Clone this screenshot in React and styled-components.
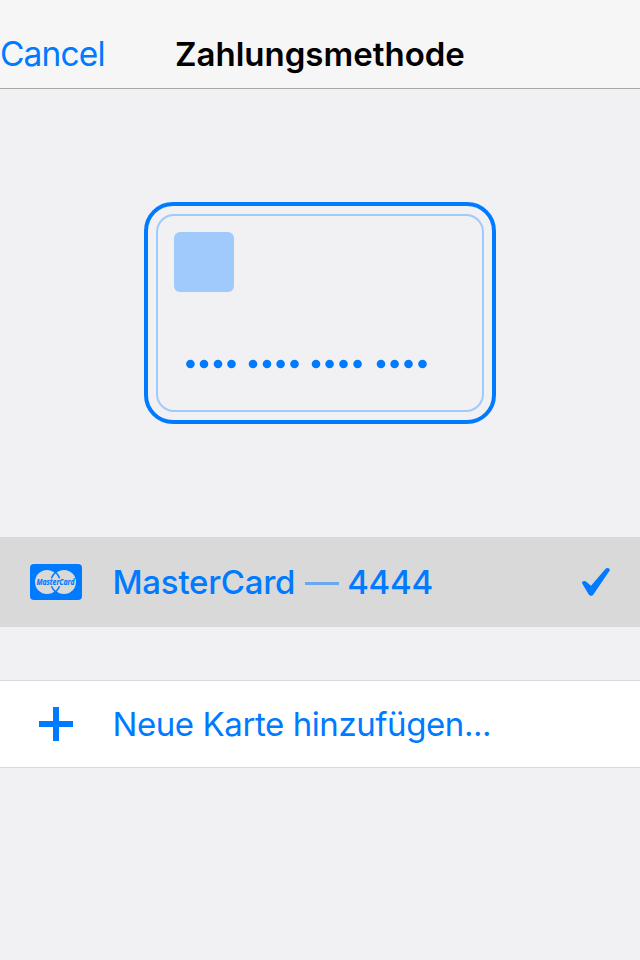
import React from "react";
import styled, { createGlobalStyle } from "styled-components";

const BLUE = "#007aff";

const GlobalStyle = createGlobalStyle`
  *, *::before, *::after { box-sizing: border-box; }
  body {
    margin: 0;
    background: #f1f1f4;
    font-family: Inter, "Liberation Sans", sans-serif;
    -webkit-font-smoothing: antialiased;
  }
`;

const Screen = styled.main`
  width: 640px;
  height: 960px;
  overflow: hidden;
  background: #f1f1f4;
`;

const NavBar = styled.header`
  display: grid;
  grid-template-columns: 175px 1fr;
  align-items: end;
  height: 89px;
  padding-bottom: 12px;
  background: #f6f6f6;
  border-bottom: 1px solid #a8a8aa;
`;

const CancelButton = styled.button`
  border: 0;
  padding: 0;
  background: none;
  color: ${BLUE};
  font: 400 33.5px/44px Inter, sans-serif;
  letter-spacing: -0.85px;
  text-align: left;
`;

const Title = styled.h1`
  margin: 0;
  color: #000;
  font-size: 33px;
  font-weight: 600;
  line-height: 44px;
  letter-spacing: 0;
  white-space: nowrap;
`;

const Preview = styled.section`
  display: flex;
  justify-content: center;
  height: 448px;
  padding-top: 113px;
`;

const CardOutline = styled.div`
  width: 352px;
  height: 222px;
  padding: 8px;
  border: 4px solid ${BLUE};
  border-radius: 29px;
`;

const CardFace = styled.div`
  display: flex;
  flex-direction: column;
  height: 100%;
  padding: 16px;
  border: 2px solid #9fcafb;
  border-radius: 18px;
`;

const Chip = styled.div`
  width: 60px;
  height: 60px;
  border-radius: 6px;
  background: #9fcafb;
`;

const CardNumber = styled.svg`
  display: block;
  width: 260px;
  height: 12px;
  margin-top: 66px;
  fill: ${BLUE};
`;

const Row = styled.div`
  display: grid;
  grid-template-columns: 112px 1fr 60px;
  align-items: center;
  height: ${(p) => (p.$selected ? 90 : 88)}px;
  margin-top: ${(p) => (p.$selected ? 0 : 53)}px;
  background: ${(p) => (p.$selected ? "#d9d9d9" : "#fff")};
  border: solid #d9d9dc;
  border-width: ${(p) => (p.$selected ? "0" : "1px 0")};
  color: ${BLUE};
`;

const RowIcon = styled.svg`
  display: block;
  justify-self: ${(p) => p.$align || "center"};
`;

const Label = styled.div`
  display: flex;
  align-items: center;
  padding-left: 0.5px;
  font-size: 33px;
  line-height: 44px;
  font-weight: ${(p) => p.$weight};
  letter-spacing: ${(p) => p.$tracking}px;
  white-space: nowrap;
`;

const Dash = styled.span`
  width: 34px;
  height: 3px;
  margin: 3px 8px 0 10px;
  background: #6ba9ef;
`;

const groups = [
  [190.4, 204, 218, 231.5],
  [253, 267, 280.6, 294.5],
  [316, 329.6, 343.5, 357.6],
  [381, 394.6, 408.5, 422.5],
];

function MasterCardIcon() {
  return (
    <RowIcon width="52" height="36" viewBox="0 0 52 36">
      <rect width="52" height="36" rx="4" fill={BLUE} />
      <circle cx="17" cy="18" r="12" fill="#d9d9d9" />
      <circle cx="34" cy="18" r="12" fill="#d9d9d9" />
      <path d="M25.5 8.2Q22.8 10.7 21.4 14.2M25.5 8.2Q28.2 10.7 29.6 14.2M25.5 27.8Q22.8 25.4 21.4 22.3M25.5 27.8Q28.2 25.4 29.6 22.3" fill="none" stroke={BLUE} strokeWidth="1.5" />
      <text x="6.5" y="20.8" fill={BLUE} stroke={BLUE} strokeWidth="0.15" fontFamily="Open Sans, sans-serif" fontSize="8" fontWeight="700" fontStyle="italic" textLength="38" lengthAdjust="spacingAndGlyphs">MasterCard</text>
    </RowIcon>
  );
}

export default function App() {
  return (
    <>
      <GlobalStyle />
      <Screen>
        <NavBar>
          <CancelButton type="button">Cancel</CancelButton>
          <Title>Zahlungsmethode</Title>
        </NavBar>
        <Preview>
          <CardOutline>
            <CardFace>
              <Chip />
              <CardNumber viewBox="174 358 260 12">
                {groups.flat().map((x) => (
                  <circle key={x} cx={x} cy="364" r="4.3" />
                ))}
              </CardNumber>
            </CardFace>
          </CardOutline>
        </Preview>
        <Row $selected>
          <MasterCardIcon />
          <Label $weight={500} $tracking={-0.25}>
            <span>MasterCard</span>
            <Dash />
            <span>4444</span>
          </Label>
          <RowIcon $align="start" width="30" height="30" viewBox="0 0 30 30">
            <path d="M2.3 16.7C1.3 14.4 4 13 6 14.5L11 18.7L25.6 1.8C27.3.2 30.4 1.3 29.7 3.6L13.5 27.2C12.4 29.3 9.9 29.3 8.6 27.3Z" fill={BLUE} />
          </RowIcon>
        </Row>
        <Row>
          <RowIcon width="34" height="34" viewBox="0 0 34 34">
            <path d="M14 0h6v14h14v6H20v14h-6V20H0v-6h14Z" fill={BLUE} />
          </RowIcon>
          <Label $weight={400} $tracking={-0.42}>Neue Karte hinzufügen...</Label>
        </Row>
      </Screen>
    </>
  );
}
